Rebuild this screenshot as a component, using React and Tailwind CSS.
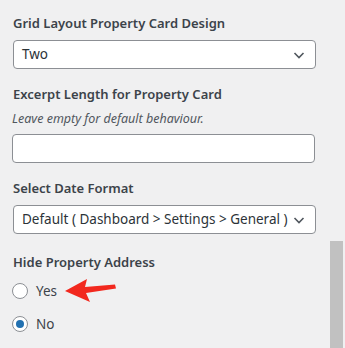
import React from 'react';

function Chevron() {
  return (
    <svg width="16" height="16" viewBox="0 0 16 16" className="text-[#50575e]">
      <path d="M3.5 6 L8 10.5 L12.5 6" fill="none" stroke="currentColor" strokeWidth="1.6" />
    </svg>
  );
}

function Select({ value }) {
  return (
    <div className="flex items-center justify-between h-[29px] w-[303px] ml-[13px] rounded-[4px] border border-[#8c8f94] bg-white pl-[8px] pr-[8px] text-[13.5px] text-[#2c3338] whitespace-nowrap">
      <span>{value}</span>
      <Chevron />
    </div>
  );
}

function Label({ children }) {
  return <div className="ml-[13px] text-[13px] font-semibold text-[#3c434a] leading-[19px]">{children}</div>;
}

function Radio({ checked, label, arrow }) {
  return (
    <div className="relative flex items-center gap-[8px] ml-[12px] h-[20px]">
      <div className="flex items-center justify-center w-[16px] h-[16px] rounded-full border border-[#8c8f94] bg-white">
        {checked && <div className="w-[8px] h-[8px] rounded-full bg-[#2271b1]" />}
      </div>
      <span className="text-[13.5px] text-[#3c434a]">{label}</span>
      {arrow && (
        <svg className="absolute left-[38px] top-[-8px]" width="70" height="36" viewBox="0 0 70 36">
          <path d="M15 18 L37 6 L35 14 L65 11.5 L66 15.5 L36 20 L40 29 Z" fill="#f2281e" />
        </svg>
      )}
    </div>
  );
}

export default function App() {
  return (
    <div className="relative w-[345px] h-[348px] overflow-hidden bg-[#f0f0f1]" style={{ fontFamily: '"Noto Sans", "Open Sans", sans-serif' }}>
      <div className="absolute right-[2px] top-[241px] w-[13px] h-[107px] bg-[#c1c1c1]" />
      <div className="pt-[14px]">
        <Label>Grid Layout Property Card Design</Label>
        <div className="mt-[7px]"><Select value="Two" /></div>
        <div className="mt-[16px]"><Label>Excerpt Length for Property Card</Label></div>
        <div className="ml-[12px] mt-[6px] text-[12.5px] italic text-[#50575e] leading-[18px]">Leave empty for default behaviour.</div>
        <div className="mt-[6px] ml-[12px] w-[303px] h-[29px] rounded-[4px] border border-[#8c8f94] bg-white" />
        <div className="mt-[16px]"><Label>Select Date Format</Label></div>
        <div className="mt-[7px]"><Select value="Default ( Dashboard > Settings > General )" /></div>
        <div className="mt-[19px]"><Label>Hide Property Address</Label></div>
        <div className="mt-[9px]"><Radio label="Yes" arrow /></div>
        <div className="mt-[13px]"><Radio label="No" checked /></div>
      </div>
    </div>
  );
}
